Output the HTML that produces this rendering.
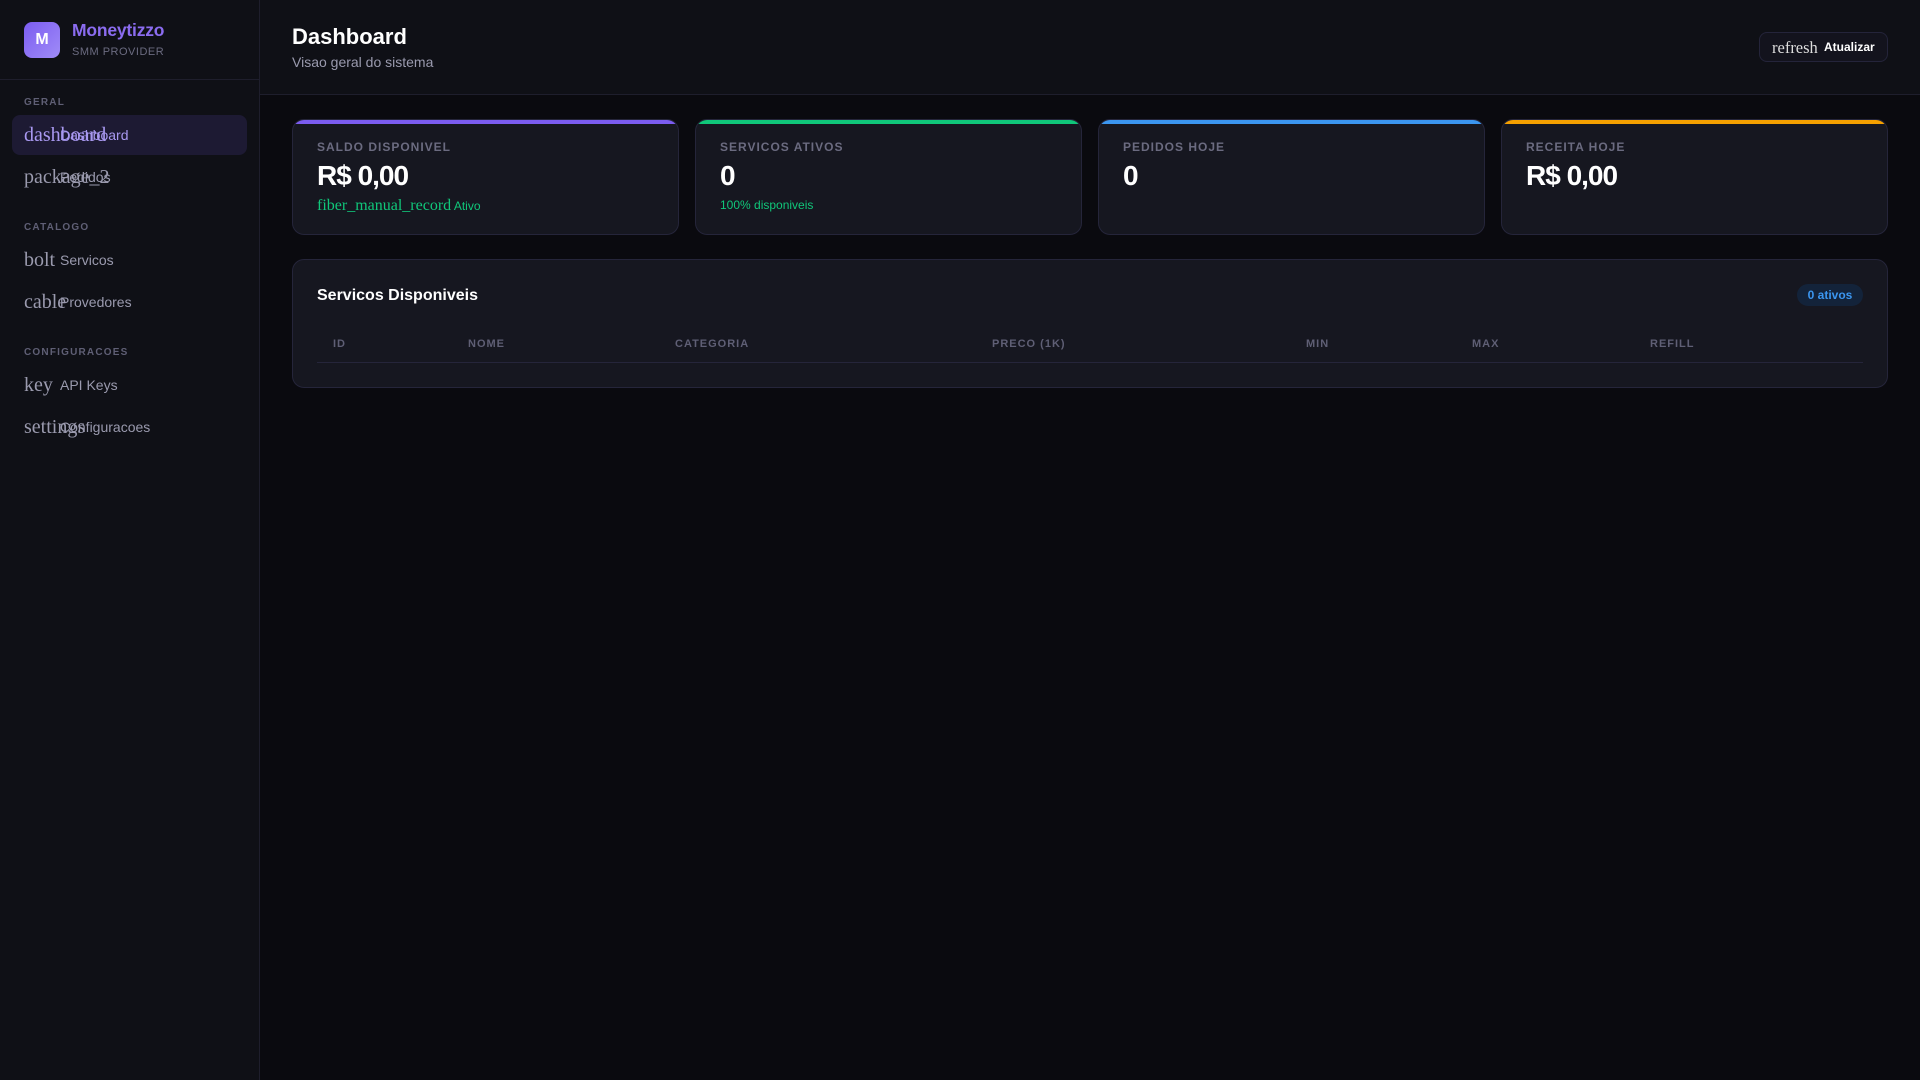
<!DOCTYPE html>
<html><head><meta charset="utf-8"><style>
*{box-sizing:border-box;margin:0;padding:0}
body{width:1920px;height:1080px;background:#0a0a0f;font-family:"Liberation Sans",sans-serif;position:relative;overflow:hidden;color:#fff}
.sb{position:absolute;left:0;top:0;width:260px;height:1080px;background:#0f1016;border-right:1px solid #1e1e2c}
.logo{position:absolute;left:24px;top:22px;width:36px;height:36px;border-radius:8px;background:linear-gradient(135deg,#7b5cf0,#a08cf8);font-weight:bold;font-size:16px;display:flex;align-items:center;justify-content:center}
.bn{position:absolute;left:72px;top:20px;font-size:17.5px;font-weight:bold;color:#8b6cf0;letter-spacing:-.2px}
.bs{position:absolute;left:72px;top:46px;font-size:11px;color:#6b6b80;letter-spacing:.5px}
.hl{position:absolute;left:0;top:79px;width:259px;height:1px;background:#1e1e2c}
.sec{position:absolute;left:24px;font-size:10px;font-weight:bold;color:#5f5f75;letter-spacing:1.2px}
.it{position:absolute;left:12px;width:235px;height:40px;border-radius:8px;color:#9a9aae;font-size:14px}
.it .ic{position:absolute;left:12px;top:9px;font-family:"Liberation Serif",serif;font-size:20px;white-space:nowrap}
.it .lb{position:absolute;left:48px;top:12px}
.act{background:#1d1a33;color:#a898f0}
.hd{position:absolute;left:260px;top:0;right:0;height:95px;background:#0f1016;border-bottom:1px solid #1e1e2c}
.t{position:absolute;left:32px;top:24px;font-size:22px;font-weight:bold}
.st{position:absolute;left:32px;top:54px;font-size:14px;color:#9a9aae}
.btn{position:absolute;left:1499px;top:32px;width:129px;height:30px;border:1px solid #24243a;border-radius:8px;background:#13131d;font-size:12px;font-weight:bold}
.btn .i{position:absolute;left:12px;top:5px;font-family:"Liberation Serif",serif;font-size:16.5px;font-weight:normal;color:#ddd}
.btn .l{position:absolute;left:64px;top:7px}
.card{position:absolute;top:119px;width:387px;height:116px;background:#161720;border:1px solid #25253a;border-radius:12px;overflow:hidden}
.card .bar{position:absolute;left:0;top:0;right:0;height:4px}
.card .k{position:absolute;left:24px;top:20px;font-size:12px;font-weight:bold;color:#6b6b80;letter-spacing:1px}
.card .v{position:absolute;left:24px;top:40px;font-size:28px;font-weight:bold;letter-spacing:-1px}
.card .s{position:absolute;left:24px;top:77px;font-size:12px;color:#10c77a}
.pn{position:absolute;left:292px;top:259px;width:1596px;height:129px;background:#161720;border:1px solid #25253a;border-radius:12px}
.pt{position:absolute;left:24px;top:27px;font-size:16px;font-weight:bold}
.bd{position:absolute;left:1504px;top:24px;width:66px;height:22px;border-radius:11px;background:#13233a;color:#3b96f0;font-size:12px;font-weight:bold;text-align:center;line-height:22px}
.th{position:absolute;top:78px;font-size:11px;font-weight:bold;color:#5f5f75;letter-spacing:1px}
.tl{position:absolute;left:24px;right:24px;top:102px;height:1px;background:#25253a}
</style></head><body>
<div class="sb">
<div class="logo">M</div><div class="bn">Moneytizzo</div><div class="bs">SMM PROVIDER</div>
<div class="hl"></div>
<div class="sec" style="top:97px">GERAL</div>
<div class="it act" style="top:115px"><span class="ic">dashboard</span><span class="lb">Dashboard</span></div>
<div class="it" style="top:157px"><span class="ic">package_2</span><span class="lb">Pedidos</span></div>
<div class="sec" style="top:222px">CATALOGO</div>
<div class="it" style="top:240px"><span class="ic">bolt</span><span class="lb">Servicos</span></div>
<div class="it" style="top:282px"><span class="ic">cable</span><span class="lb">Provedores</span></div>
<div class="sec" style="top:347px">CONFIGURACOES</div>
<div class="it" style="top:365px"><span class="ic">key</span><span class="lb">API Keys</span></div>
<div class="it" style="top:407px"><span class="ic">settings</span><span class="lb">Configuracoes</span></div>
</div>
<div class="hd"><div class="t">Dashboard</div><div class="st">Visao geral do sistema</div>
<div class="btn"><span class="i">refresh</span><span class="l">Atualizar</span></div></div>
<div class="card" style="left:292px"><div class="bar" style="background:#7b5cf0"></div><div class="k">SALDO DISPONIVEL</div><div class="v">R$ 0,00</div><div class="s"><span style="font-family:'Liberation Serif',serif;font-size:16px">fiber_manual_record</span> Ativo</div></div>
<div class="card" style="left:695px"><div class="bar" style="background:#10c77a"></div><div class="k">SERVICOS ATIVOS</div><div class="v">0</div><div class="s" style="top:78px">100% disponiveis</div></div>
<div class="card" style="left:1098px"><div class="bar" style="background:#3b96f0"></div><div class="k">PEDIDOS HOJE</div><div class="v">0</div></div>
<div class="card" style="left:1501px"><div class="bar" style="background:#f5a000"></div><div class="k">RECEITA HOJE</div><div class="v">R$ 0,00</div></div>
<div class="pn"><div class="pt">Servicos Disponiveis</div><div class="bd">0 ativos</div>
<div class="th" style="left:40px">ID</div><div class="th" style="left:175px">NOME</div><div class="th" style="left:382px">CATEGORIA</div><div class="th" style="left:699px">PRECO (1K)</div><div class="th" style="left:1013px">MIN</div><div class="th" style="left:1179px">MAX</div><div class="th" style="left:1357px">REFILL</div>
<div class="tl"></div></div>
</body></html>
